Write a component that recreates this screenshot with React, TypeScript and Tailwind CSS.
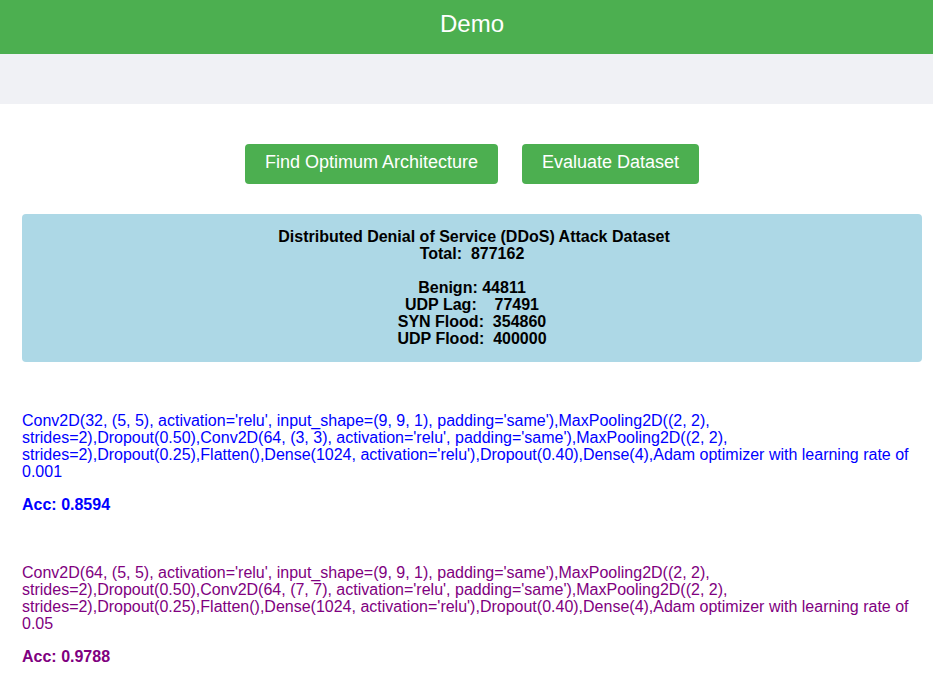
const results = [
  {
    arch: "Conv2D(32, (5, 5), activation='relu', input_shape=(9, 9, 1), padding='same'),MaxPooling2D((2, 2), strides=2),Dropout(0.50),Conv2D(64, (3, 3), activation='relu', padding='same'),MaxPooling2D((2, 2), strides=2),Dropout(0.25),Flatten(),Dense(1024, activation='relu'),Dropout(0.40),Dense(4),Adam optimizer with learning rate of 0.001",
    acc: '0.8594',
    color: 'text-[#0000ff]',
  },
  {
    arch: "Conv2D(64, (5, 5), activation='relu', input_shape=(9, 9, 1), padding='same'),MaxPooling2D((2, 2), strides=2),Dropout(0.50),Conv2D(64, (7, 7), activation='relu', padding='same'),MaxPooling2D((2, 2), strides=2),Dropout(0.25),Flatten(),Dense(1024, activation='relu'),Dropout(0.40),Dense(4),Adam optimizer with learning rate of 0.05",
    acc: '0.9788',
    color: 'text-[#800080]',
  },
];

export default function App() {
  return (
    <div className="min-h-[690px] bg-white font-['Liberation_Sans',Arial,sans-serif]">
      <header className="h-[54px] bg-[#4caf50] flex items-center justify-center pl-[11px] pb-[6px]">
        <h1 className="text-[24px] text-white">Demo</h1>
      </header>
      <div className="h-[50px] bg-[#f0f1f5]"></div>

      <div className="mt-[40px] flex justify-center gap-[24px] pl-[11px]">
        <button className="h-[40px] px-[20px] pb-[3px] rounded bg-[#4caf50] text-white text-[18px]">
          Find Optimum Architecture
        </button>
        <button className="h-[40px] px-[20px] pb-[3px] rounded bg-[#4caf50] text-white text-[18px]">
          Evaluate Dataset
        </button>
      </div>

      <div className="mt-[30px] ml-[22px] mr-[11px] rounded bg-[#add8e6] pt-[14px] pb-[15px] text-center font-bold text-[16px] leading-[17px] text-black whitespace-pre">
        <div className="pl-[4px]">Distributed Denial of Service (DDoS) Attack Dataset</div>
        <div>Total:  877162</div>
        <div>&nbsp;</div>
        <div>Benign: 44811</div>
        <div>UDP Lag:    77491</div>
        <div>SYN Flood:  354860</div>
        <div>UDP Flood:  400000</div>
      </div>

      <div className="pl-[22px] pr-[12px] pt-[50px]">
        {results.map((r, i) => (
          <div key={i} className={`${r.color} text-[16px] leading-[17px] ${i > 0 ? 'mt-[51px]' : ''}`}>
            <p>{r.arch}</p>
            <p className="mt-[16px] font-bold">Acc: {r.acc}</p>
          </div>
        ))}
      </div>
    </div>
  );
}
